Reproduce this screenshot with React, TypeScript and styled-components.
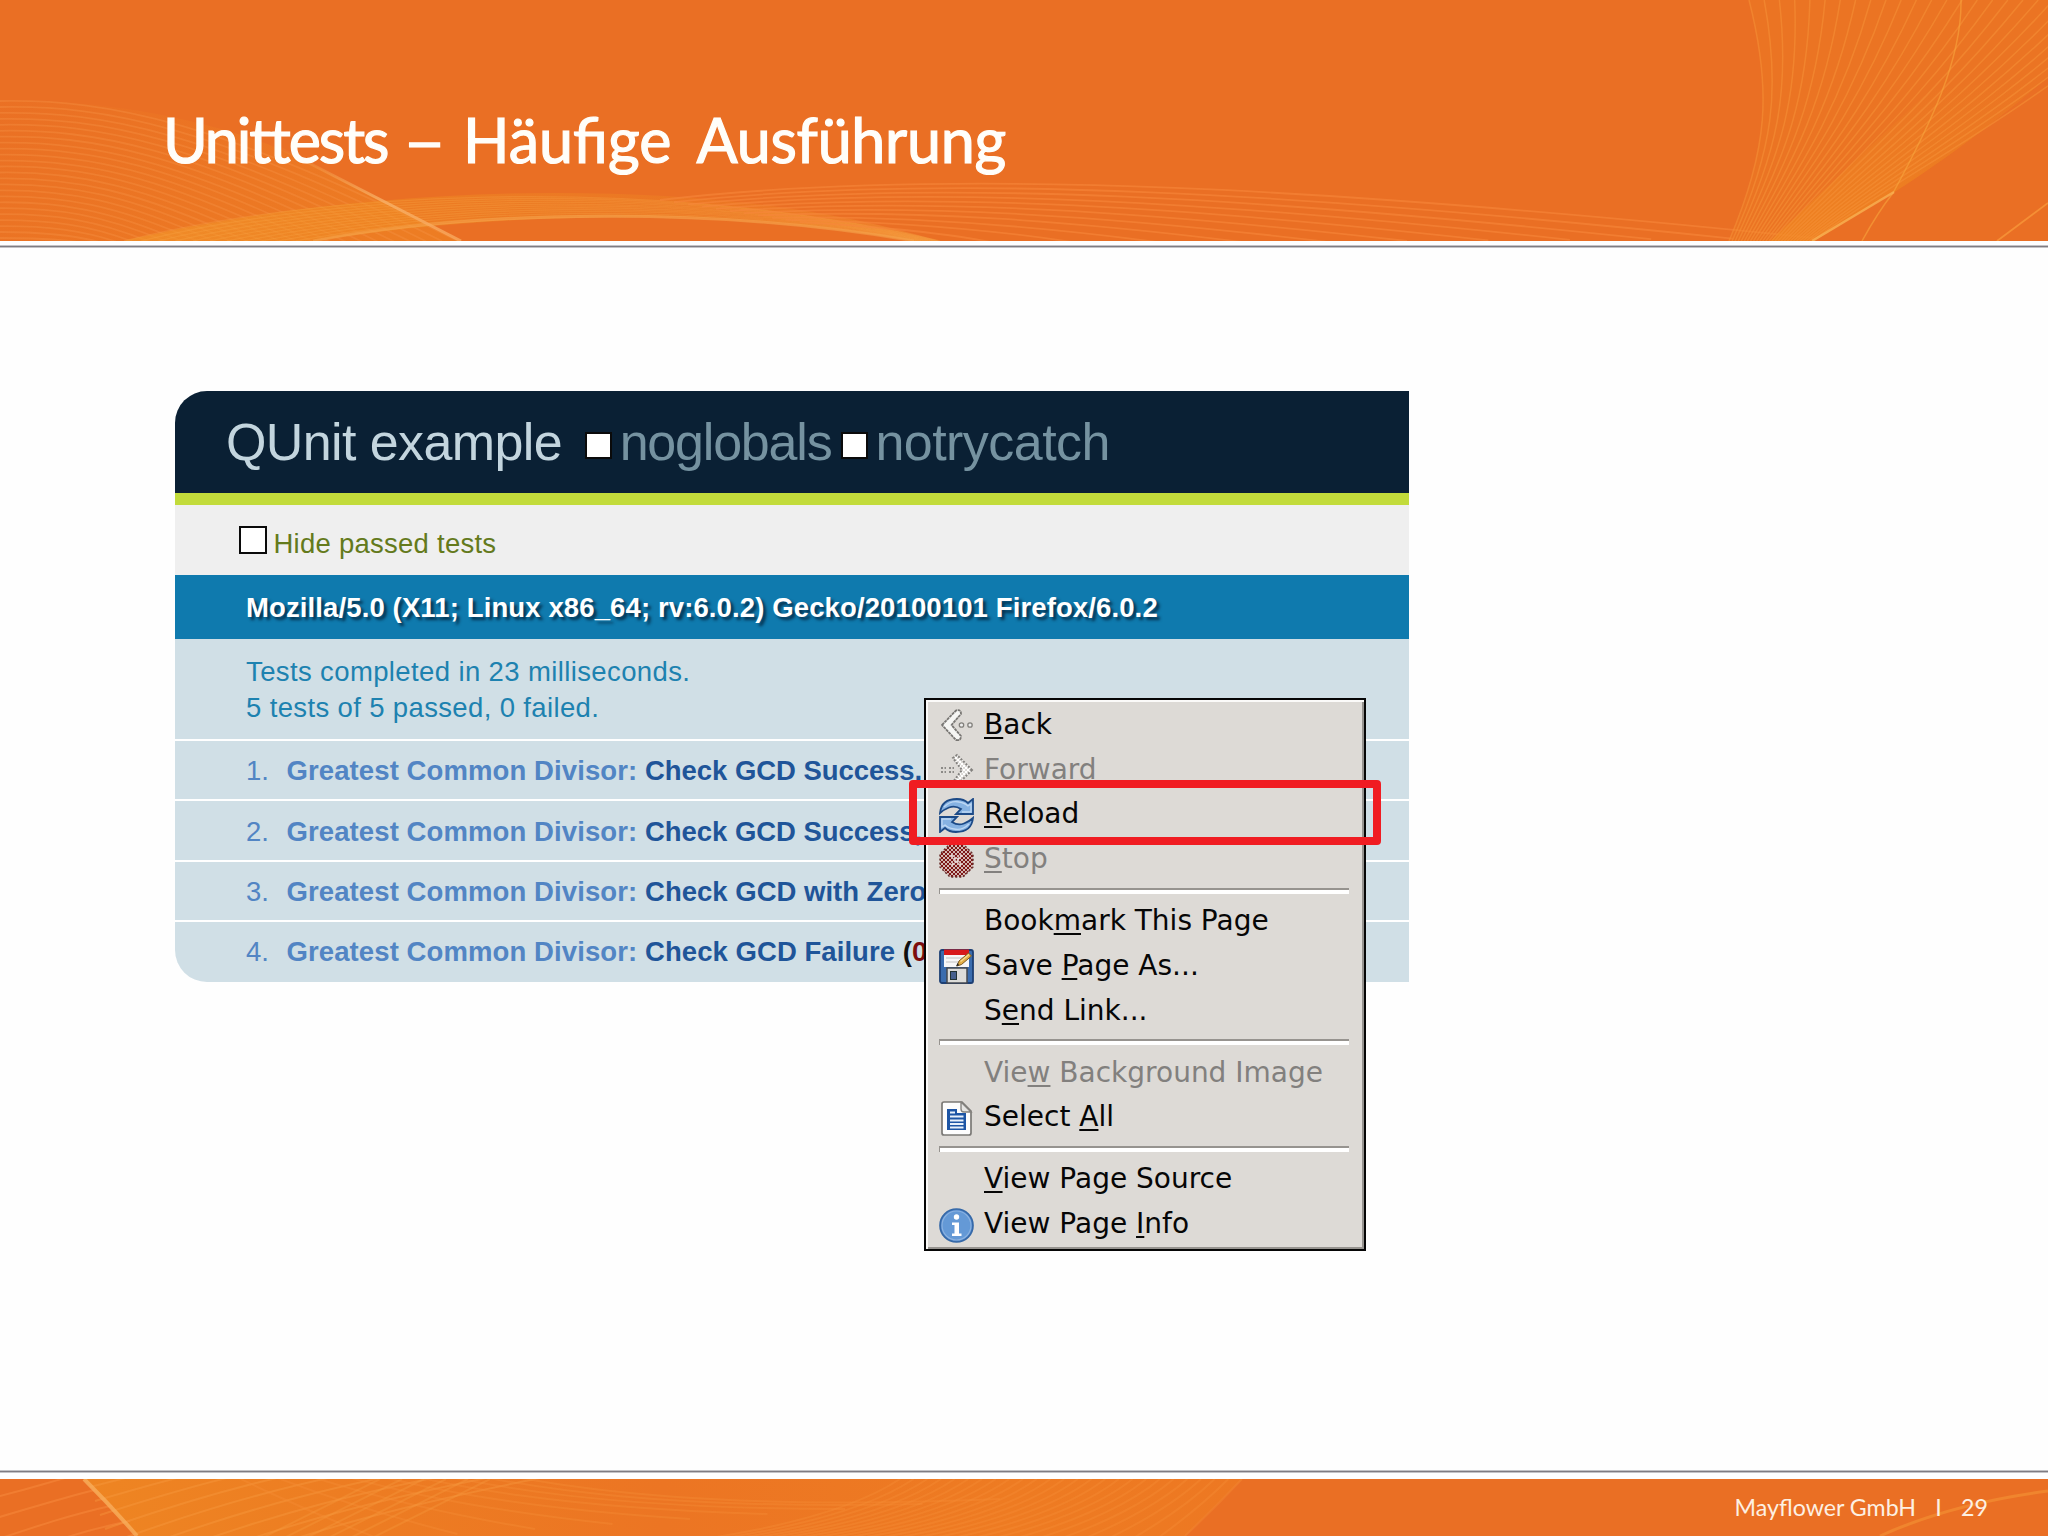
import React from "react";
import styled, { createGlobalStyle, css } from "styled-components";

const Global = createGlobalStyle`
  * { box-sizing: border-box; }
  body { margin: 0; background: #fefefe; }
`;

const Slide = styled.div`
  width: 2048px;
  height: 1536px;
  display: flex;
  flex-direction: column;
  overflow: hidden;
  background: #fefefe;
`;

const Band = styled.div<{ $h: number }>`
  flex: none;
  height: ${(p) => p.$h}px;
  background: #ea6f24;
  display: grid;
  overflow: hidden;
  > * { grid-area: 1 / 1; }
`;

const Rule = styled.div<{ $before: number; $after: number }>`
  flex: none;
  height: 3px;
  margin-top: ${(p) => p.$before}px;
  margin-bottom: ${(p) => p.$after}px;
  background: #7f7c82;
  border: solid #c4c3c6;
  border-width: 1px 0;
`;

const SlideTitle = styled.h1`
  margin: 0;
  padding: 100px 0 0 163px;
  display: grid;
  grid-template-columns: 240px 60px 233.5px auto;
  align-content: start;
  justify-items: start;
  font: 400 61px/80px Lato, "Open Sans", sans-serif;
  color: #fffefa;
  -webkit-text-stroke: 1.2px #fffefa;
  white-space: nowrap;
`;

const Word = styled.span<{ $ls?: string; $stretch?: number }>`
  letter-spacing: ${(p) => p.$ls ?? "normal"};
  transform: ${(p) => (p.$stretch ? `scaleX(${p.$stretch})` : "none")};
  transform-origin: left;
`;

const Main = styled.main`
  flex: 1;
  min-height: 0;
  padding: 143px 0 0 175px;
  position: relative;
`;

const Report = styled.section`
  width: 1234px;
  border-radius: 32px 0 0 32px;
  overflow: hidden;
  font-family: "Liberation Sans", Arial, sans-serif;
  font-size: 27.5px;
  white-space: nowrap;
`;

const ReportHead = styled.header`
  height: 102px;
  padding: 0 0 0 51px;
  display: flex;
  align-items: center;
  background: #0a2034;
  font-size: 52px;
  color: #c3d5de;
`;

const Box = styled.span<{ $size: number; $ml?: number; $mr?: number; $top?: number }>`
  flex: none;
  width: ${(p) => p.$size}px;
  height: ${(p) => p.$size}px;
  margin: ${(p) => p.$top ?? 0}px ${(p) => p.$mr ?? 0}px 0 ${(p) => p.$ml ?? 0}px;
  background: #fff;
  border: 2.5px solid #0a0a0a;
`;

const Track = styled.span<{ $ls?: number; $color?: string }>`
  letter-spacing: ${(p) => p.$ls ?? 0}px;
  ${(p) => p.$color && css`color: ${p.$color};`}
`;

const Toolbar = styled.div`
  height: 82px;
  border-top: 12px solid #c2db3b;
  padding: 7px 0 0 64px;
  display: flex;
  align-items: center;
  background: #efefef;
  color: #647a1c;
`;

const Agent = styled.div`
  height: 64px;
  padding: 2px 0 0 71px;
  display: flex;
  align-items: center;
  background: #0f7aae;
  color: #fff;
  font-weight: 700;
  text-shadow: 3px 3px 3px rgba(0, 20, 40, 0.7);
`;

const Result = styled.div`
  height: 100px;
  padding: 15px 0 0 71px;
  background: #d0dfe6;
  color: #1d82b0;
  line-height: 36.4px;
`;

const TestRow = styled.div<{ $h: number; $pad: number }>`
  height: ${(p) => p.$h}px;
  border-top: 2px solid #fff;
  padding: ${(p) => p.$pad}px 0 0 71px;
  display: flex;
  align-items: center;
  background: #d0dfe6;
  font-weight: 700;
  color: #1f5599;
`;

const Num = styled.span`
  width: 40.5px;
  font-weight: 400;
  color: #5285c4;
`;

const Menu = styled.div`
  position: absolute;
  left: 924px;
  top: 450px;
  width: 442px;
  height: 553px;
  border: 2.5px solid #060606;
  background: #dddad6;
  box-shadow: inset 2px 2px 0 #fbfaf9, inset -2px -2px 0 #96938f;
  padding: 2.6px 2px 0;
`;

const Item = styled.div<{ $off?: boolean }>`
  height: 44.75px;
  padding-left: 11px;
  display: flex;
  align-items: center;
  white-space: nowrap;
  font: 28px/36px "DejaVu Sans", sans-serif;
  color: ${(p) => (p.$off ? "#82807e" : "#060606")};
`;

const IconSlot = styled.span`
  width: 35px;
  height: 35px;
  margin: 2px 10px 0 0;
  flex: none;
  svg { display: block; }
`;

const Key = styled.span`
  text-decoration: underline;
  text-decoration-thickness: 2px;
  text-underline-offset: 3px;
  text-decoration-skip-ink: none;
`;

const Sep = styled.div`
  height: 17.2px;
  padding: 6px 13px 0 11px;
  &::after {
    content: "";
    display: block;
    height: 4px;
    background: #fff;
    border-top: 2px solid #96938f;
    border-left: 1px solid #96938f;
  }
`;

const Highlight = styled.div`
  position: absolute;
  left: 909px;
  top: 532px;
  width: 472px;
  height: 65px;
  border: 8px solid #f01c22;
  border-radius: 4px;
`;

const FootText = styled.div`
  justify-self: end;
  padding: 13px 60px 0 0;
  display: flex;
  gap: 19.3px;
  font: 400 23.2px/30px Lato, "Open Sans", sans-serif;
  color: #fdf0e2;
`;

type Pts = number[];
const mix = (a: Pts, b: Pts, t: number) => a.map((v, i) => v + (b[i] - v) * t);
const toPath = (p: Pts) => {
  const r = p.map((v) => Math.round(v * 10) / 10);
  return `M${r[0]} ${r[1]}C${r.slice(2).join(" ")}`;
};

function Fan({ a, b, n, color, o, w = 1.6 }: { a: Pts; b: Pts; n: number; color: string; o: number; w?: number }) {
  return (
    <g fill="none" stroke={color} strokeOpacity={o} strokeWidth={w}>
      {Array.from({ length: n }, (_, i) => (
        <path key={i} d={toPath(mix(a, b, i / (n - 1)))} />
      ))}
    </g>
  );
}

function HeaderArt() {
  return (
    <svg width="2048" height="241" viewBox="0 0 2048 241">
      <defs>
        <linearGradient id="arch" x1="0" x2="1" y1="0" y2="0">
          <stop offset="0" stopColor="#f39a2c" stopOpacity="0.6" />
          <stop offset="0.35" stopColor="#f08c22" stopOpacity="0.45" />
          <stop offset="0.75" stopColor="#f08c22" stopOpacity="0.25" />
          <stop offset="1" stopColor="#f6a040" stopOpacity="0.45" />
        </linearGradient>
        <linearGradient id="ray" x1="0" x2="1" y1="0" y2="1">
          <stop offset="0" stopColor="#f5a04a" stopOpacity="0" />
          <stop offset="0.6" stopColor="#f8b26a" stopOpacity="0.8" />
          <stop offset="1" stopColor="#f8a75c" stopOpacity="0.8" />
        </linearGradient>
        <linearGradient id="beam" x1="0" x2="0" y1="0" y2="1">
          <stop offset="0" stopColor="#f08a20" stopOpacity="0" />
          <stop offset="1" stopColor="#f08a20" stopOpacity="0.65" />
        </linearGradient>
        <linearGradient id="wing" x1="0" x2="1" y1="0.2" y2="0.6">
          <stop offset="0" stopColor="#f08322" stopOpacity="0.08" />
          <stop offset="1" stopColor="#f08a22" stopOpacity="0.5" />
        </linearGradient>
      </defs>
      <path d="M0 101C100 98 220 120 300 158L460 241H0Z" fill="url(#wing)" />
      <Fan a={[0, 101, 110, 99, 220, 122, 458, 241]} b={[0, 238, 40, 238, 70, 240, 90, 244]} n={24} color="#f79246" o={0.36} w={1.8} />
      <path d="M124 241C240 213 400 193 555 193S830 209 940 241H914C800 222 730 217 653 217C540 216 420 224 313 241Z" fill="url(#arch)" />
      <Fan a={[124, 241, 300, 195, 640, 170, 940, 241]} b={[313, 241, 480, 211, 720, 207, 914, 241]} n={12} color="#f7a445" o={0.3} w={1.3} />
      <path d="M313 241C480 209 720 207 914 241" fill="none" stroke="#f6a650" strokeOpacity="0.5" strokeWidth="3" />
      <Fan a={[660, 200, 960, 165, 1350, 190, 1814, 238]} b={[800, 222, 900, 228, 960, 235, 1000, 244]} n={11} color="#f6873a" o={0.6} w={1.8} />
      <path d="M270 143L461 241" stroke="url(#ray)" strokeWidth="3" />
      <path d="M1749 0C1770 80 1770 150 1729 241H1814L1893 193C1960 150 2010 110 2048 77V0Z" fill="#f08222" fillOpacity="0.3" />
      <path d="M1770 241L1930 90L2048 77C2010 110 1960 150 1893 193L1814 241Z" fill="url(#beam)" />
      <Fan a={[1749, 0, 1772, 90, 1768, 150, 1729, 241]} b={[2160, 0, 2010, 125, 1900, 175, 1812, 241]} n={28} color="#f58f35" o={0.6} w={1.5} />
      <path d="M1961 0C1962 60 1930 125 1893 193Q1878 212 1862 241" fill="none" stroke="#f8a53c" strokeOpacity="0.6" strokeWidth="1.5" />
      <path d="M1894 192L1812 241" stroke="#fab75a" strokeOpacity="0.7" strokeWidth="2.5" />
      <path d="M2048 203L1997 241" stroke="#f58f35" strokeWidth="1.8" />
    </svg>
  );
}

function FooterArt() {
  return (
    <svg width="2048" height="57" viewBox="0 0 2048 57">
      <defs>
        <linearGradient id="foot" x1="0" x2="1" y1="0" y2="0">
          <stop offset="0" stopColor="#ee8522" />
          <stop offset="0.25" stopColor="#ed7c22" />
          <stop offset="0.5" stopColor="#ec7523" />
          <stop offset="0.8" stopColor="#ee7b22" />
          <stop offset="1" stopColor="#ed7822" />
        </linearGradient>
      </defs>
      <path d="M83 0L137 57H1185L1242 0Z" fill="url(#foot)" />
      <Fan a={[-60, 8, 0, 0, 20, -8, 60, -20]} b={[-20, 90, 40, 66, 80, 52, 130, 42]} n={5} color="#f5873a" o={0.6} w={2} />
      <Fan a={[90, 8, 160, -10, 200, -20, 300, -40]} b={[130, 120, 300, 50, 420, 20, 640, -20]} n={9} color="#f79a40" o={0.4} w={2} />
      <Fan a={[180, -30, 240, 0, 300, 30, 380, 60]} b={[400, -30, 560, 20, 760, 30, 1000, 20]} n={9} color="#f68b34" o={0.4} w={2} />
      <Fan a={[490, 0, 440, 25, 400, 45, 370, 60]} b={[380, 0, 340, 20, 300, 40, 260, 60]} n={6} color="#f79a40" o={0.35} w={2} />
      <Fan a={[560, 70, 700, 70, 840, 40, 900, 0]} b={[1185, 57, 1205, 38, 1225, 18, 1242, 0]} n={26} color="#f68c34" o={0.4} w={2} />
      <path d="M84 0Q112 28 137 57" fill="none" stroke="#f8b060" strokeOpacity="0.75" strokeWidth="4" />
      <path d="M1880 57Q1950 25 2048 12" fill="none" stroke="#f0852e" strokeWidth="3" />
    </svg>
  );
}

const BackIcon = () => (
  <svg width="35" height="35" viewBox="0 0 35 35">
    <path d="M3 17L17 2.500Q22 1 22 6L12.500 17L22 28Q22 33 17 32Z" fill="#f6f6f4" stroke="#787673" strokeWidth="1.800" strokeDasharray="3 0.600" strokeLinejoin="round" />
    <circle cx="22.500" cy="17" r="2.200" fill="#eee" stroke="#82807c" strokeWidth="1.300" />
    <circle cx="31" cy="17" r="2.200" fill="#eee" stroke="#82807c" strokeWidth="1.300" />
  </svg>
);

const ForwardIcon = () => (
  <svg width="35" height="35" viewBox="0 0 35 35">
    <defs>
      <pattern id="dotsW" width="4" height="4" patternUnits="userSpaceOnUse">
        <rect width="4" height="4" fill="#dddad6" />
        <rect width="2" height="2" fill="#fff" />
        <rect x="2" y="2" width="2" height="2" fill="#fff" />
      </pattern>
    </defs>
    <path d="M33 17L18 2L14 5L23 17L14 29L18 32Z" fill="url(#dotsW)" stroke="#83817e" strokeWidth="2" strokeDasharray="2 1.500" />
    <path d="M2 15h5M2 19h5M10 15h5M10 19h5" stroke="#8c8a87" strokeWidth="2" strokeDasharray="2 1.500" />
  </svg>
);

const ReloadIcon = () => (
  <svg width="35" height="35" viewBox="0 0 35 35">
    <g fill="#86b2e2" stroke="#1c4a87" strokeWidth="1.800" strokeLinejoin="miter">
      <path d="M1 15C2 5 9 1 18 1Q25 1 29 5L34 1V16H17L22 11Q16 7 10 9.500Q4 12 1 15Z" />
      <path d="M34 20C33 30 26 34 17 34Q10 34 6 30L1 34V19H18L13 24Q19 28 25 25.500Q31 23 34 20Z" />
    </g>
    <path d="M5 9Q12 2 20 4Q26 5 29 8L32 6V14H23" fill="none" stroke="#bdd7f3" strokeWidth="1.300" />
    <path d="M30 26Q23 33 15 31Q9 30 6 27L3 29V21H12" fill="none" stroke="#bdd7f3" strokeWidth="1.300" />
  </svg>
);

const StopIcon = () => (
  <svg width="35" height="35" viewBox="0 0 35 35">
    <defs>
      <pattern id="dotsR" width="4" height="4" patternUnits="userSpaceOnUse">
        <rect width="4" height="4" fill="#d3b8b3" />
        <rect width="2" height="2" fill="#7d1616" />
        <rect x="2" y="2" width="2" height="2" fill="#7d1616" />
      </pattern>
    </defs>
    <path d="M11 1H24L34 11V24L24 34H11L1 24V11Z" fill="url(#dotsR)" stroke="#6a302e" strokeWidth="1.500" strokeDasharray="2 2" />
    <path d="M12 12L23 23M23 12L12 23" stroke="#e6d6d3" strokeWidth="2.200" strokeDasharray="2.500 1.500" />
  </svg>
);

const SaveIcon = () => (
  <svg width="35" height="35" viewBox="0 0 35 35">
    <rect x="1" y="1" width="33" height="33" rx="2" fill="#3a6cae" stroke="#1d3f74" strokeWidth="1.800" />
    <rect x="5" y="1" width="25" height="17" fill="#f7f7f7" />
    <rect x="5" y="0.500" width="25" height="5.500" fill="#d8191b" />
    <path d="M7 9H25M7 13H20" stroke="#d4d4d4" strokeWidth="1.500" />
    <rect x="8" y="19" width="20" height="15" fill="#dcdcd9" stroke="#44484f" strokeWidth="1.500" />
    <rect x="11.500" y="22.500" width="6" height="8" fill="#46608d" stroke="#233" strokeWidth="1" />
    <path d="M18 17L20 12L29.500 4L32.500 7L22.500 15.500Z" fill="#e2ad45" stroke="#7d5a20" strokeWidth="1" />
    <path d="M21.500 12.500L30 5.500" stroke="#f7dc93" strokeWidth="1.300" />
    <path d="M17 17.500L20 16L18.500 14Z" fill="#222" />
  </svg>
);

const PageIcon = () => (
  <svg width="35" height="35" viewBox="0 0 35 35">
    <path d="M5 1H23L32 10V32Q32 34 30 34H5Q3 34 3 32V3Q3 1 5 1Z" fill="#fdfdfd" stroke="#7b7976" strokeWidth="1.700" />
    <path d="M22 1V8Q22 11 25 11H32Z" fill="#e6e5e3" stroke="#85837f" strokeWidth="1.400" />
    <path d="M8 8H18V12H27V29H8Z" fill="#1d55a5" />
    <path d="M11 11.500H16M11 15.500H24.500M11 19.500H24.500M11 23H24.500M11 26.500H24.500" stroke="#e8f1fb" strokeWidth="1.900" />
  </svg>
);

const InfoIcon = () => (
  <svg width="35" height="35" viewBox="0 0 35 35">
    <circle cx="17.500" cy="17.500" r="16.500" fill="#4f86cb" stroke="#3669a8" strokeWidth="1.700" />
    <circle cx="17.500" cy="17.500" r="14.500" fill="#6499d6" stroke="#8bb2e0" strokeWidth="1.200" />
    <circle cx="17.500" cy="9" r="2.700" fill="#fff" />
    <path d="M13 14.500H20V25.500H22.500V28H13V25.500H15.500V17H13Z" fill="#fff" />
  </svg>
);

const icons = { back: BackIcon, forward: ForwardIcon, reload: ReloadIcon, stop: StopIcon, save: SaveIcon, page: PageIcon, info: InfoIcon };

type Entry = { icon?: keyof typeof icons; off?: boolean; text: string };

// An underscore marks the letter that carries the access key.
const groups: Entry[][] = [
  [
    { icon: "back", text: "_Back" },
    { icon: "forward", off: true, text: "_Forward" },
    { icon: "reload", text: "_Reload" },
    { icon: "stop", off: true, text: "_Stop" },
  ],
  [{ text: "Book_mark This Page" }, { icon: "save", text: "Save _Page As..." }, { text: "S_end Link..." }],
  [{ off: true, text: "Vie_w Background Image" }, { icon: "page", text: "Select _All" }],
  [{ text: "_View Page Source" }, { icon: "info", text: "View Page _Info" }],
];

function MenuItem({ icon, off, text }: Entry) {
  const i = text.indexOf("_");
  const Icon = icon && icons[icon];
  return (
    <Item $off={off}>
      <IconSlot>{Icon && <Icon />}</IconSlot>
      <span>
        {text.slice(0, i)}
        <Key>{text[i + 1]}</Key>
        {text.slice(i + 2)}
      </span>
    </Item>
  );
}

const tests = [
  { name: "Check GCD Success,", h: 60, pad: 1, ls: -0.06 },
  { name: "Check GCD Success,", h: 61, pad: 3, ls: -0.06 },
  { name: "Check GCD with Zero", h: 60, pad: 1, ls: 0 },
  { name: "Check GCD Failure", h: 62, pad: 0, ls: 0.05, failed: "0" },
];

export default function App() {
  return (
    <Slide>
      <Global />
      <Band $h={241}>
        <HeaderArt />
        <SlideTitle>
          <Word $ls="-2.1px">Unittests</Word>
          <Word $stretch={1.22}>–</Word>
          <Word>Häufige</Word>
          <Word $ls="-0.3px">Ausführung</Word>
        </SlideTitle>
      </Band>
      <Rule $before={4} $after={0} />
      <Main>
        <Report>
          <ReportHead>
            <Track $ls={-0.6}>QUnit example</Track>
            <Box $size={27} $ml={22.5} $mr={8} $top={7} />
            <Track $ls={-1.2} $color="#7592a0">noglobals</Track>
            <Box $size={27} $ml={9.5} $mr={7.5} $top={7} />
            <Track $ls={-0.55} $color="#7592a0">notrycatch</Track>
          </ReportHead>
          <Toolbar>
            <Box $size={28} $mr={6.5} $top={-7} />
            <Track $ls={0.25}>Hide passed tests</Track>
          </Toolbar>
          <Agent>
            <Track $ls={0.12}>Mozilla/5.0 (X11; Linux x86_64; rv:6.0.2) Gecko/20100101 Firefox/6.0.2</Track>
          </Agent>
          <Result>
            <Track $ls={0.38}>Tests completed in 23 milliseconds.</Track>
            <br />
            <Track $ls={0.36}>5 tests of 5 passed, 0 failed.</Track>
          </Result>
          {tests.map((t, i) => (
            <TestRow key={i} $h={t.h} $pad={t.pad}>
              <Num>{i + 1}.</Num>
              <Track $ls={0.1} $color="#5285c4">Greatest Common Divisor:&nbsp;</Track>
              <Track $ls={t.ls}>
                {t.name}
                {t.failed && (
                  <>
                    &nbsp;<Track $color="#101010">(</Track>
                    <Track $color="#7c0d0d">{t.failed}</Track>
                  </>
                )}
              </Track>
            </TestRow>
          ))}
        </Report>
        <Menu>
          {groups.map((g, i) => (
            <React.Fragment key={i}>
              {i > 0 && <Sep />}
              {g.map((e) => (
                <MenuItem key={e.text} {...e} />
              ))}
            </React.Fragment>
          ))}
        </Menu>
        <Highlight />
      </Main>
      <Rule $before={0} $after={6} />
      <Band $h={57}>
        <FooterArt />
        <FootText>
          <span>Mayflower GmbH</span>
          <span>I</span>
          <span>29</span>
        </FootText>
      </Band>
    </Slide>
  );
}
